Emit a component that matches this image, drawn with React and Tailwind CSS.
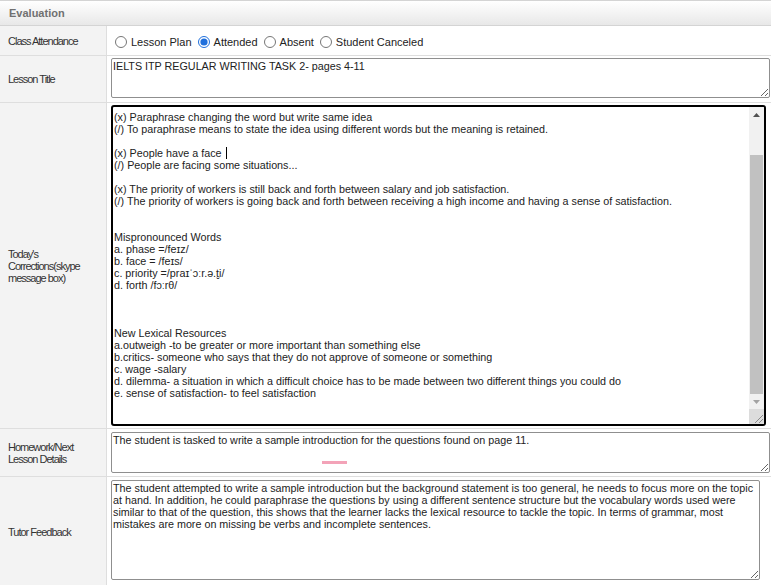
import React from 'react';

const corrections = [
  '(x) Paraphrase changing the word but write same idea',
  '(/) To paraphrase means to state the idea using different words but the meaning is retained.',
  '',
  'CURSOR',
  '(/) People are facing some situations...',
  '',
  '(x) The priority of workers is still back and forth between salary and job satisfaction.',
  '(/) The priority of workers is going back and forth between receiving a high income and having a sense of satisfaction.',
  '',
  '',
  'Mispronounced Words',
  'a. phase =/feɪz/',
  'b. face = /feɪs/',
  'c. priority =/praɪˈɔːr.ə.t̬i/',
  'd. forth /fɔːrθ/',
  '',
  '',
  '',
  'New Lexical Resources',
  'a.outweigh -to be greater or more important than something else',
  'b.critics- someone who says that they do not approve of someone or something',
  'c. wage -salary',
  'd. dilemma- a situation in which a difficult choice has to be made between two different things you could do',
  'e. sense of satisfaction- to feel satisfaction',
];

const feedback =
  'The student attempted to write a sample introduction but the background statement is too general, he needs to focus more on the topic\n' +
  'at hand. In addition, he could paraphrase the questions by using a different sentence structure but the vocabulary words used were\n' +
  'similar to that of the question, this shows that the learner lacks the lexical resource to tackle the topic. In terms of grammar, most\n' +
  'mistakes are more on missing be verbs and incomplete sentences.';

function Label({ children }) {
  return (
    <div className="flex w-[107px] shrink-0 items-center border-r border-[#dedede] bg-[#f3f3f3] px-2 text-[11px] leading-[12px] tracking-[-1px] text-[#333]">
      <span className="pr-1">{children}</span>
    </div>
  );
}

function Radio({ label, checked }) {
  return (
    <label className="flex items-center">
      <input
        type="radio"
        name="attendance"
        defaultChecked={checked}
        className="ml-[4px] mr-[4px] h-[12px] w-[12px] accent-[#1f6fdc]"
      />
      <span className="mr-[2px]">{label}</span>
    </label>
  );
}

function ScrollBar() {
  return (
    <div className="flex w-[15px] shrink-0 flex-col bg-[#f1f1f1]">
      <div className="flex h-[15px] items-center justify-center">
        <svg width="7" height="4" viewBox="0 0 7 4">
          <path d="M3.5 0 L7 4 L0 4 Z" fill="#505050" />
        </svg>
      </div>
      <div className="flex flex-1 flex-col px-[1px]">
        <div className="h-[33px]" />
        <div className="flex-1 bg-[#c1c1c1]" />
      </div>
      <div className="flex h-[15px] items-center justify-center">
        <svg width="7" height="4" viewBox="0 0 7 4">
          <path d="M0 0 L7 0 L3.5 4 Z" fill="#a3a3a3" />
        </svg>
      </div>
      <div className="h-[15px] bg-[#dcdcdc]">
        <svg width="15" height="15" viewBox="0 0 15 15">
          <path d="M14 6 L6 14 M14 10 L10 14" stroke="#8a8a8a" strokeWidth="1" />
        </svg>
      </div>
    </div>
  );
}

export default function App() {
  const field =
    "block resize-y overflow-hidden rounded-[2px] border border-[#8f8f8f] bg-white p-[1px] font-['Liberation_Sans',Arial,sans-serif] text-[10.75px] leading-[12px] text-[#222] outline-none";

  return (
    <div className="h-[585px] w-[771px] overflow-hidden bg-white font-['Liberation_Sans',Arial,sans-serif]">
      <div className="flex h-[26px] items-center border-y border-[#d4d4d4] bg-linear-to-b from-white to-[#e8e8e8] pl-[9px] text-[11px] font-bold text-[#707070]">
        Evaluation
      </div>

      <div className="flex h-[30px] border-b border-[#dedede]">
        <Label>Class Attendance</Label>
        <div className="flex items-center pl-[4px] pt-[3px] text-[11px] text-[#222]">
          <Radio label="Lesson Plan" />
          <Radio label="Attended" checked />
          <Radio label="Absent" />
          <Radio label="Student Canceled" />
        </div>
      </div>

      <div className="flex h-[47px] border-b border-[#dedede]">
        <Label>Lesson Title</Label>
        <div className="pl-[4px] pt-[2px]">
          <textarea
            readOnly
            className={field + ' h-[40px] w-[659px]'}
            defaultValue="IELTS ITP REGULAR WRITING TASK 2- pages 4-11"
          />
        </div>
      </div>

      <div className="flex h-[326px] border-b border-[#dedede]">
        <Label>Today's Corrections(skype message box)</Label>
        <div className="pl-[4px] pt-[2px]">
          <div className="flex h-[321px] w-[655px] overflow-hidden rounded-[3px] border-2 border-black bg-white">
            <div className="flex-1 overflow-hidden whitespace-pre pl-[1px] pt-[4px] text-[10.75px] leading-[12px] text-[#222]">
              {corrections.map((line, i) =>
                line === 'CURSOR' ? (
                  <div key={i} className="h-[12px]">
                    (x) People have a face
                    <span className="ml-[4px] inline-block h-[12px] w-px bg-black align-top" />
                  </div>
                ) : (
                  <div key={i} className="h-[12px]">
                    {line}
                  </div>
                )
              )}
            </div>
            <ScrollBar />
          </div>
        </div>
      </div>

      <div className="flex h-[48px] border-b border-[#dedede]">
        <Label>Homework/Next Lesson Details</Label>
        <div className="pl-[4px] pt-[3px]">
          <div className="relative">
            <textarea
              readOnly
              className={field + ' h-[41px] w-[659px]'}
              defaultValue="The student is tasked to write a sample introduction for the questions found on page 11."
            />
            <span className="absolute left-[211px] top-[29px] h-[3px] w-[25px] bg-[#f3a3b8]" />
          </div>
        </div>
      </div>

      <div className="flex h-[109px]">
        <Label>Tutor Feedback</Label>
        <div className="pl-[4px] pt-[3px]">
          <textarea
            readOnly
            wrap="off"
            className={field + ' h-[100px] w-[649px]'}
            defaultValue={feedback}
          />
        </div>
      </div>
    </div>
  );
}
